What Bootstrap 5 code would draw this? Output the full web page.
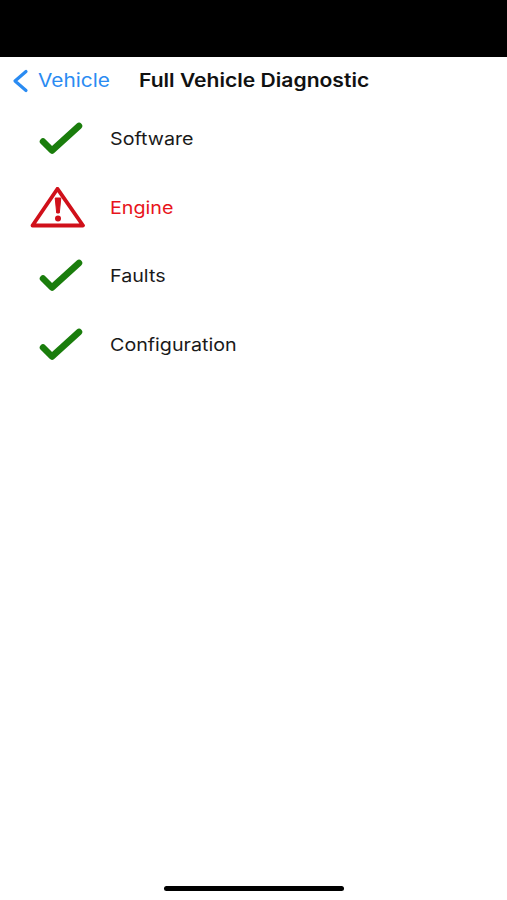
<!DOCTYPE html>
<html lang="en">
<head>
<meta charset="utf-8">
<title>Full Vehicle Diagnostic</title>
<link href="https://cdn.jsdelivr.net/npm/bootstrap@5.3.0/dist/css/bootstrap.min.css" rel="stylesheet">
<style>
html, body { height: 900px; overflow: hidden; background: #fff; }
body { font-family: Inter, "Liberation Sans", sans-serif; }
.scr-shell { height: 900px; }
.status-strip { height: 57px; background: #000; }
.nav-strip { height: 48px; padding-left: 11px; }
.back-link { width: 128px; color: #2a8bf2; font-size: 18.5px; text-decoration: none; gap: 9px; }
.nav-title { font-size: 18.5px; font-weight: 600; color: #111; }
.wide-text { display: inline-block; transform: scaleX(1.125); transform-origin: left center; white-space: nowrap; }
.nav-title.wide-text { transform: scaleX(1.14); }
.diag-row { height: 68.55px; padding: 0; background: transparent; border: 0; font-size: 17.5px; color: #1a1a1a; }
.diag-icon { width: 110px; padding-left: 30px; }
.diag-fail { color: #e8141c; }
.home-bar { width: 180px; height: 5px; border-radius: 3px; background: #000; margin-bottom: 9px; }
</style>
</head>
<body>
<div class="scr-shell d-flex flex-column">
  <div class="status-strip"></div>
  <nav class="nav-strip d-flex align-items-center">
    <a class="back-link d-flex align-items-center" href="#">
      <svg width="18" height="24" viewBox="0 0 18 24"><path d="M15 2.500 L4 12 L15 21.500" fill="none" stroke="#2a8bf2" stroke-width="3.200" stroke-linecap="round" stroke-linejoin="round"/></svg>
      <span class="wide-text">Vehicle</span>
    </a>
    <span class="nav-title wide-text">Full Vehicle Diagnostic</span>
  </nav>
  <div class="list-group list-group-flush flex-grow-1">
    <div class="list-group-item diag-row d-flex align-items-center">
      <span class="diag-icon d-flex"><svg width="56" height="36" viewBox="0 0 56 36"><path d="M13 20.500 L22 29.500 L49 5" fill="none" stroke="#1a7d0c" stroke-width="6.500" stroke-linecap="round" stroke-linejoin="round"/></svg></span>
      <span class="wide-text">Software</span>
    </div>
    <div class="list-group-item diag-row diag-fail d-flex align-items-center">
      <span class="diag-icon d-flex"><svg width="56" height="42" viewBox="0 0 56 42"><path d="M27.500 1.800 L53 38.500 L2.500 38.500 Z" fill="#fff" stroke="#d0101a" stroke-width="3.800" stroke-linejoin="round"/><path d="M25.200 11 H30.800 L29.300 26 H26.700 Z" fill="#d0101a" stroke="#d0101a" stroke-linejoin="round"/><circle cx="28" cy="31.500" r="3" fill="#d0101a"/></svg></span>
      <span class="wide-text">Engine</span>
    </div>
    <div class="list-group-item diag-row d-flex align-items-center">
      <span class="diag-icon d-flex"><svg width="56" height="36" viewBox="0 0 56 36"><path d="M13 20.500 L22 29.500 L49 5" fill="none" stroke="#1a7d0c" stroke-width="6.500" stroke-linecap="round" stroke-linejoin="round"/></svg></span>
      <span class="wide-text">Faults</span>
    </div>
    <div class="list-group-item diag-row d-flex align-items-center">
      <span class="diag-icon d-flex"><svg width="56" height="36" viewBox="0 0 56 36"><path d="M13 20.500 L22 29.500 L49 5" fill="none" stroke="#1a7d0c" stroke-width="6.500" stroke-linecap="round" stroke-linejoin="round"/></svg></span>
      <span class="wide-text">Configuration</span>
    </div>
  </div>
  <div class="d-flex justify-content-center"><div class="home-bar"></div></div>
</div>
<script src="https://cdn.jsdelivr.net/npm/bootstrap@5.3.0/dist/js/bootstrap.bundle.min.js"></script>
</body>
</html>
